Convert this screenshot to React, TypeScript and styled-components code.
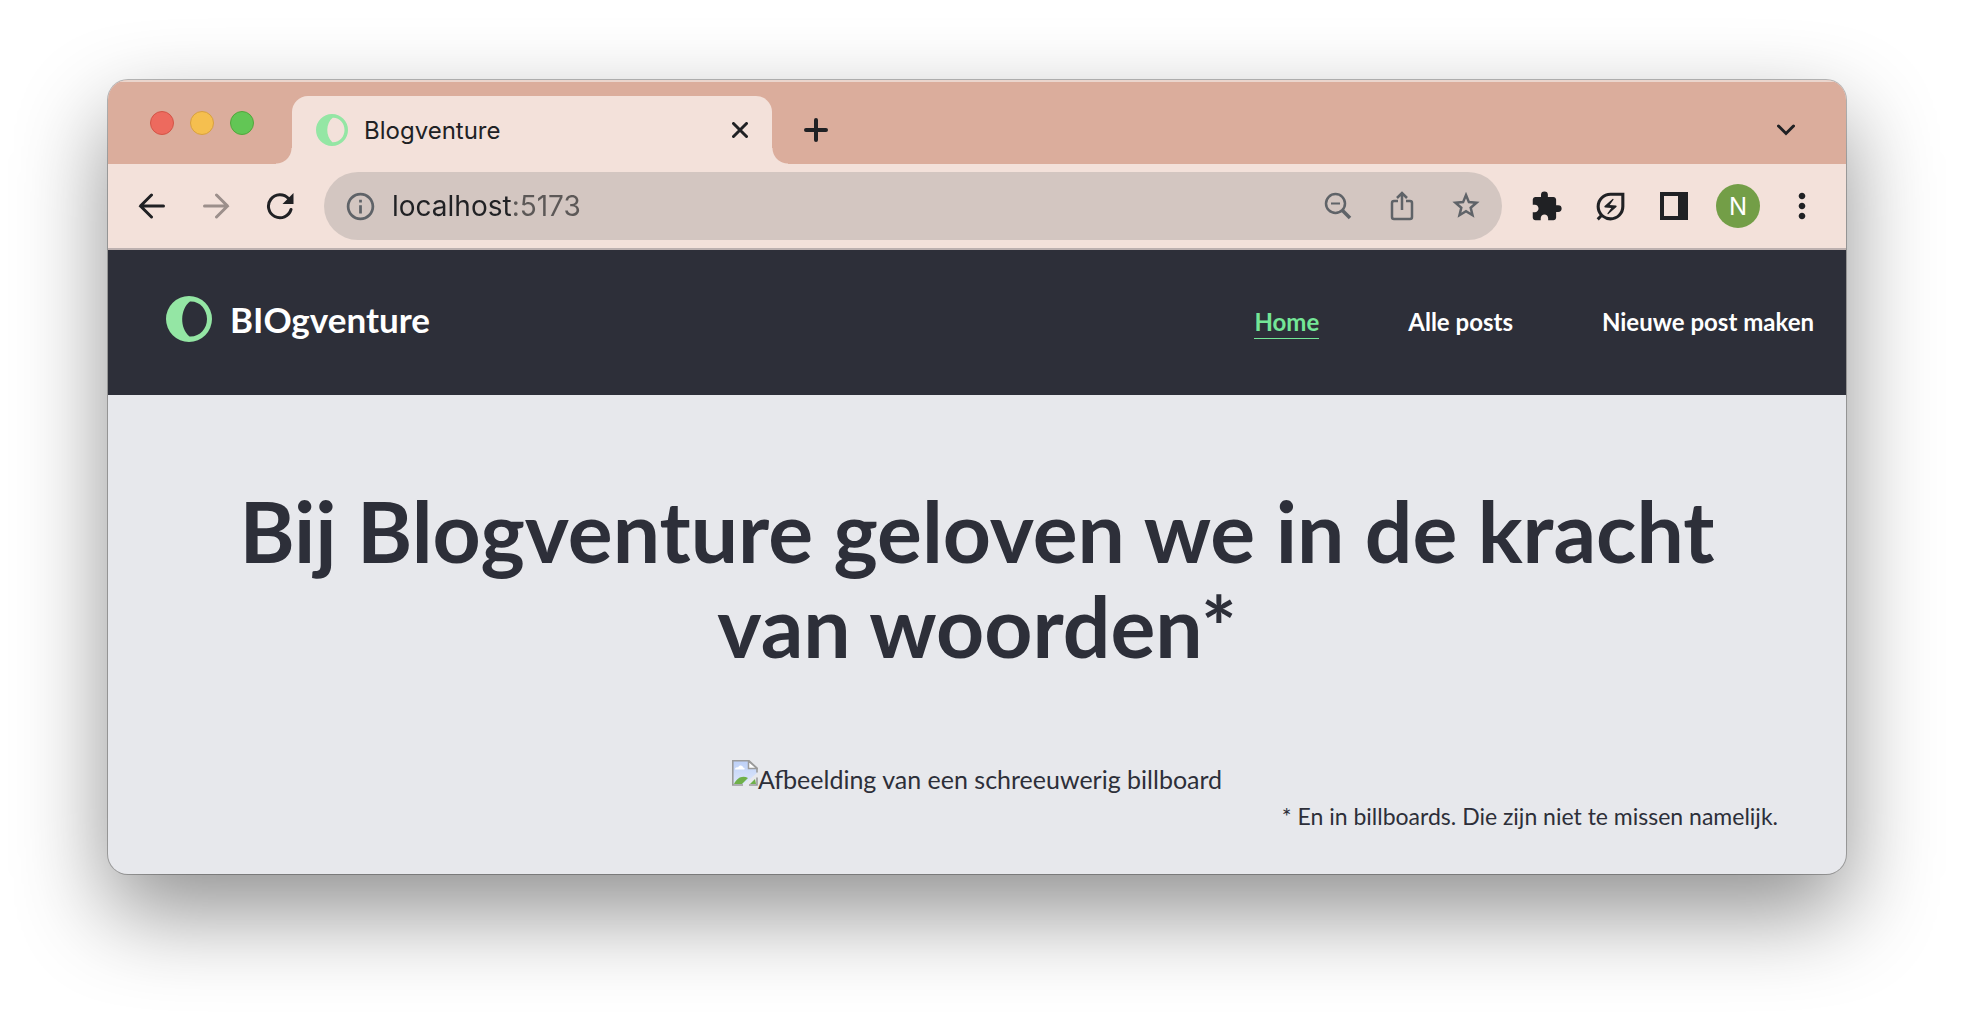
import React from 'react';
import styled, { createGlobalStyle } from 'styled-components';
import {
  MdExtension,
  MdInfoOutline,
  MdMoreVert,
  MdOutlineEnergySavingsLeaf,
} from 'react-icons/md';

const color = {
  strip: '#dbad9c',
  bar: '#f3e1da',
  field: '#d3c6c1',
  ink: '#202124',
  muted: '#5f6368',
  night: '#2d2f39',
  paper: '#e7e8ec',
  mint: '#94e6a4',
  link: '#74e697',
};

const GlobalStyle = createGlobalStyle`
  *, *::before, *::after { box-sizing: border-box; }
  body { margin: 0; background: #fff; }
  button { font: inherit; border: 0; padding: 0; background: none; color: inherit; cursor: pointer; }
  svg { display: block; flex: none; }
`;

const Desktop = styled.div`
  padding: 80px 120px 158px 108px;
`;

const BrowserWindow = styled.div`
  border-radius: 20px;
  overflow: hidden;
  background: ${color.paper};
  box-shadow: 0 0 0 1px rgba(0, 0, 0, 0.26), 0 38px 90px rgba(0, 0, 0, 0.44);
  font-family: Inter, "Liberation Sans", sans-serif;
  color: ${color.ink};
`;

const TabStrip = styled.div`
  display: flex;
  align-items: flex-end;
  height: 84px;
  padding-right: 44px;
  background: ${color.strip};
  border-top: 2px solid #ead5cd;
`;

const WindowControls = styled.div`
  display: flex;
  align-self: stretch;
  align-items: center;
  gap: 16px;
  width: 184px;
  padding-left: 42px;
`;

const Light = styled.button<{ $fill: string; $edge: string }>`
  width: 24px;
  height: 24px;
  border: 1px solid ${(p) => p.$edge};
  border-radius: 50%;
  background: ${(p) => p.$fill};
`;

const Tab = styled.div`
  position: relative;
  display: flex;
  align-items: center;
  gap: 16px;
  width: 480px;
  height: 68px;
  padding: 0 24px;
  border-radius: 16px 16px 0 0;
  background: ${color.bar};
  font-size: 24px;

  &::before,
  &::after {
    content: '';
    position: absolute;
    bottom: 0;
    width: 16px;
    height: 16px;
  }
  &::before {
    right: 100%;
    background: radial-gradient(circle at 0 0, transparent 15px, ${color.bar} 16px);
  }
  &::after {
    left: 100%;
    background: radial-gradient(circle at 100% 0, transparent 15px, ${color.bar} 16px);
  }
`;

const TabTitle = styled.span`
  flex: 1;
`;

const IconButton = styled.button<{ $size?: number }>`
  display: grid;
  place-items: center;
  flex: none;
  width: ${(p) => p.$size ?? 64}px;
  height: ${(p) => p.$size ?? 64}px;
`;

const NewTab = styled(IconButton)`
  margin-left: 28px;
  margin-right: auto;
  height: 68px;
`;

const TabSearch = styled(IconButton)`
  height: 68px;
`;

const Toolbar = styled.div`
  display: flex;
  align-items: center;
  height: 86px;
  padding: 0 12px;
  background: ${color.bar};
  border-bottom: 2px solid #bcb0af;
`;

const AddressBar = styled.label`
  display: flex;
  align-items: center;
  flex: 1;
  height: 68px;
  margin: 0 12px;
  padding: 0 4px 0 20px;
  border-radius: 34px;
  background: ${color.field};
  color: ${color.muted};
`;

const AddressInput = styled.input`
  flex: 1;
  min-width: 0;
  margin: 0 15px;
  padding: 0;
  border: 0;
  outline: 0;
  font: 28px/36px Inter, "Liberation Sans", sans-serif;
  color: transparent;
  background: linear-gradient(to right, ${color.ink} 119px, #5c5857 119px);
  background-clip: text;
`;

const Avatar = styled.span`
  display: grid;
  place-items: center;
  width: 44px;
  height: 44px;
  border-radius: 50%;
  background: #739e47;
  color: #fff;
  font-size: 24px;
`;

const SiteHeader = styled.header`
  display: flex;
  align-items: center;
  justify-content: space-between;
  height: 145px;
  padding: 0 32px 0 58px;
  background: ${color.night};
  color: #fff;
  font-family: Lato, "Noto Sans", sans-serif;
`;

const Brand = styled.a`
  display: flex;
  align-items: center;
  gap: 18px;
  padding-bottom: 8px;
  color: inherit;
  text-decoration: none;
  font-size: 35px;
  font-weight: 700;
  line-height: 46px;
`;

const Nav = styled.nav`
  display: flex;
  gap: 89px;
`;

const NavLink = styled.a<{ $active?: boolean }>`
  border-bottom: 1px solid ${(p) => (p.$active ? color.link : 'transparent')};
  color: ${(p) => (p.$active ? color.link : '#fff')};
  font-size: 24px;
  font-weight: 700;
  line-height: 32px;
  text-decoration: none;
`;

const Page = styled.main`
  padding: 88px 68px 40px;
  color: ${color.night};
  font-family: Lato, "Noto Sans", sans-serif;
`;

const Title = styled.h1`
  margin: 0 0 84px;
  font-size: 84px;
  font-weight: 700;
  line-height: 95px;
  text-align: center;
`;

const Figure = styled.figure`
  margin: 0;
`;

const MissingImage = styled.div`
  display: flex;
  justify-content: center;
  padding-top: 3px;
  font-size: 25px;
  line-height: 38px;
`;

const Caption = styled.figcaption`
  font-size: 23px;
  line-height: 36px;
  text-align: right;
`;

const Moon = ({ size }: { size: number }) => (
  <svg width={size} height={size} viewBox="0 0 46 46" aria-hidden="true">
    <path
      fill={color.mint}
      fillRule="evenodd"
      d="M23 0a23 23 0 1 1 0 46a23 23 0 1 1 0-46zM24 5.500C14 13 13.500 32 23.500 40.500C34 41 41 32.500 41 23C41 13.500 34 5 24 5.500z"
    />
  </svg>
);

type StrokeProps = { w: number; h: number; d: string; stroke?: string; width?: number; cap?: 'round' | 'butt' };

const Stroke = ({ w, h, d, stroke = color.ink, width = 3, cap = 'round' }: StrokeProps) => (
  <svg width={w} height={h} viewBox={`0 0 ${w} ${h}`} aria-hidden="true">
    <path d={d} fill="none" stroke={stroke} strokeWidth={width} strokeLinecap={cap} strokeLinejoin="miter" />
  </svg>
);

const SidePanelIcon = () => (
  <svg width="28" height="28" viewBox="0 0 28 28" aria-hidden="true">
    <path fill={color.ink} fillRule="evenodd" d="M0 0h28v28H0zM4 4v20h14V4z" />
  </svg>
);

const BrokenImageIcon = () => (
  <svg width="26" height="26" viewBox="0 0 26 26" aria-hidden="true">
    <defs>
      <linearGradient id="sky" x1="0" y1="0" x2="0" y2="1">
        <stop offset="0" stopColor="#bdd0f7" />
        <stop offset="1" stopColor="#dfe8fb" />
      </linearGradient>
    </defs>
    <path d="M1 1h16l8 7v5L11 25H1z" fill="url(#sky)" />
    <path d="M3 9.500c0-2 2-2.500 3-2c1-3 5-2.500 5 0c2 0 2 2 1 2z" fill="#fff" />
    <path d="M2 24c3-6 8-9 14-6l-6 6z" fill="#6fb04a" />
    <path d="M18 24l5-5l1 5z" fill="#6fb04a" />
    <path d="M16.500 1v7.500H25z" fill="#fff" stroke="#9b9b9b" strokeWidth="1.500" />
    <path d="M11 25H.800V.800H17L25 8v4.500M25 17.500V25h-8" fill="none" stroke="#9b9b9b" strokeWidth="1.600" />
  </svg>
);

const navItems = ['Home', 'Alle posts', 'Nieuwe post maken'];

export default function App() {
  return (
    <>
      <GlobalStyle />
      <Desktop>
        <BrowserWindow>
          <TabStrip>
            <WindowControls>
              <Light $fill="#ed6a5e" $edge="#d35547" aria-label="Sluiten" />
              <Light $fill="#f5bf4f" $edge="#d8a040" aria-label="Minimaliseren" />
              <Light $fill="#62c655" $edge="#52a73c" aria-label="Maximaliseren" />
            </WindowControls>
            <Tab>
              <Moon size={32} />
              <TabTitle>Blogventure</TabTitle>
              <IconButton $size={16} aria-label="Tabblad sluiten">
                <Stroke w={16} h={16} d="M1.500 1.500l13 13M14.500 1.500l-13 13" />
              </IconButton>
            </Tab>
            <NewTab $size={32} aria-label="Nieuw tabblad">
              <Stroke w={24} h={24} width={4} d="M12 2v20M2 12h20" />
            </NewTab>
            <TabSearch $size={32} aria-label="Tabbladen zoeken">
              <Stroke w={18} h={12} d="M1.500 2L9 9.500L16.500 2" />
            </TabSearch>
          </TabStrip>

          <Toolbar>
            <IconButton aria-label="Terug">
              <Stroke w={28} h={26} d="M13.500 2L2.500 13l11 11M2.500 13H25.500" />
            </IconButton>
            <IconButton aria-label="Vooruit">
              <Stroke w={28} h={26} stroke="#9c8f8b" d="M14.500 2L25.500 13l-11 11M25.500 13H2.500" />
            </IconButton>
            <IconButton aria-label="Vernieuwen">
              <svg width="28" height="28" viewBox="0 0 28 28" fill="none" aria-hidden="true">
                <path
                  d="M25 17.500A11.500 11.500 0 1 1 22.500 6.500"
                  stroke={color.ink}
                  strokeWidth="3"
                  strokeLinecap="round"
                />
                <path d="M27.500 1v11H16.500z" fill={color.ink} />
              </svg>
            </IconButton>
            <AddressBar>
              <MdInfoOutline size={33} />
              <AddressInput aria-label="Adres" defaultValue="localhost:5173" />
              <IconButton aria-label="Uitzoomen">
                <svg width="28" height="28" viewBox="0 0 28 28" fill="none" stroke={color.muted} aria-hidden="true">
                  <circle cx="11.500" cy="11.500" r="9.500" strokeWidth="2.500" />
                  <path d="M7 11.500h9" strokeWidth="2" />
                  <path d="M18.500 18.500l7.500 7.500" strokeWidth="3.500" />
                </svg>
              </IconButton>
              <IconButton aria-label="Delen">
                <Stroke
                  w={24}
                  h={30}
                  stroke={color.muted}
                  width={2.5}
                  cap="butt"
                  d="M8 10H4Q2 10 2 12V26Q2 28 4 28H20Q22 28 22 26V12Q22 10 20 10H16M12 19V2M7 7l5-5l5 5"
                />
              </IconButton>
              <IconButton aria-label="Bladwijzer">
                <Stroke
                  w={30}
                  h={30}
                  stroke={color.muted}
                  width={2.5}
                  d="M15 4L17.900 11.100L25.500 11.700L19.700 16.700L21.500 24.200L15 20.200L8.500 24.200L10.300 16.700L4.500 11.700L12.100 11.100Z"
                />
              </IconButton>
            </AddressBar>
            <IconButton aria-label="Extensies">
              <MdExtension size={33} />
            </IconButton>
            <IconButton aria-label="Energiebesparing">
              <MdOutlineEnergySavingsLeaf size={37} />
            </IconButton>
            <IconButton aria-label="Zijpaneel">
              <SidePanelIcon />
            </IconButton>
            <IconButton aria-label="Profiel">
              <Avatar>N</Avatar>
            </IconButton>
            <IconButton aria-label="Menu">
              <MdMoreVert size={40} />
            </IconButton>
          </Toolbar>

          <SiteHeader>
            <Brand href="#home">
              <Moon size={46} />
              BIOgventure
            </Brand>
            <Nav>
              {navItems.map((item, i) => (
                <NavLink key={item} href={`#${i}`} $active={i === 0}>
                  {item}
                </NavLink>
              ))}
            </Nav>
          </SiteHeader>

          <Page>
            <Title>Bij Blogventure geloven we in de kracht van woorden*</Title>
            <Figure>
              <MissingImage>
                <BrokenImageIcon />
                <span>Afbeelding van een schreeuwerig billboard</span>
              </MissingImage>
              <Caption>* En in billboards. Die zijn niet te missen namelijk.</Caption>
            </Figure>
          </Page>
        </BrowserWindow>
      </Desktop>
    </>
  );
}
